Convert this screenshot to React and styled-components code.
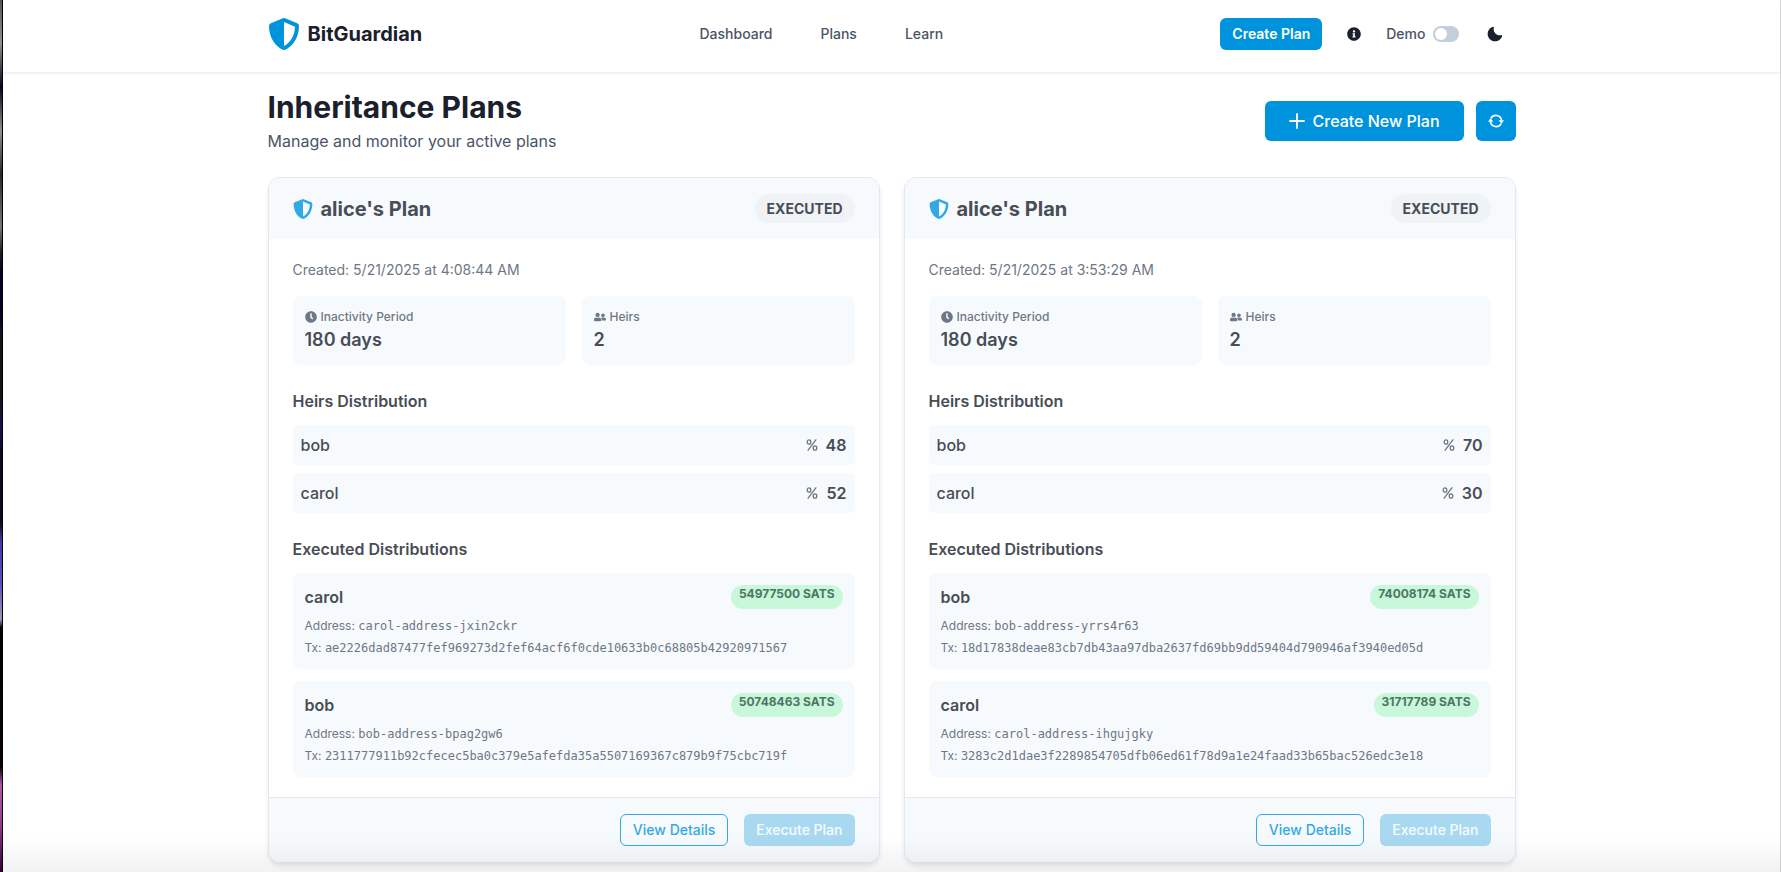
import styled, { createGlobalStyle } from 'styled-components';
import {
  FaShieldAlt,
  FaInfoCircle,
  FaClock,
  FaUserFriends,
} from 'react-icons/fa';

const plans = [
  {
    id: 'plan-1',
    name: "alice's Plan",
    created: '5/21/2025 at 4:08:44 AM',
    days: 180,
    heirs: [
      { name: 'bob', share: 48 },
      { name: 'carol', share: 52 },
    ],
    distributions: [
      {
        name: 'carol',
        sats: 54977500,
        address: 'carol-address-jxin2ckr',
        tx: 'ae2226dad87477fef969273d2fef64acf6f0cde10633b0c68805b42920971567',
      },
      {
        name: 'bob',
        sats: 50748463,
        address: 'bob-address-bpag2gw6',
        tx: '2311777911b92cfecec5ba0c379e5afefda35a5507169367c879b9f75cbc719f',
      },
    ],
  },
  {
    id: 'plan-2',
    name: "alice's Plan",
    created: '5/21/2025 at 3:53:29 AM',
    days: 180,
    heirs: [
      { name: 'bob', share: 70 },
      { name: 'carol', share: 30 },
    ],
    distributions: [
      {
        name: 'bob',
        sats: 74008174,
        address: 'bob-address-yrrs4r63',
        tx: '18d17838deae83cb7db43aa97dba2637fd69bb9dd59404d790946af3940ed05d',
      },
      {
        name: 'carol',
        sats: 31717789,
        address: 'carol-address-ihgujgky',
        tx: '3283c2d1dae3f2289854705dfb06ed61f78d9a1e24faad33b65bac526edc3e18',
      },
    ],
  },
];

export default function App() {
  return (
    <>
      <GlobalStyle />
      <Screen>
        <DesktopEdge />
        <Window>
          <Header>
            <HeaderInner>
              <Logo href="#">
                <FaShieldAlt size={32} color="#0093dd" />
                BitGuardian
              </Logo>
              <Nav>
                <NavLink href="#dashboard">Dashboard</NavLink>
                <NavLink href="#plans">Plans</NavLink>
                <NavLink href="#learn">Learn</NavLink>
              </Nav>
              <Actions>
                <SmallButton type="button">Create Plan</SmallButton>
                <GhostButton type="button" $size={32} aria-label="About">
                  <FaInfoCircle size={14} />
                </GhostButton>
                <DemoLabel htmlFor="demo">
                  Demo
                  <Switch id="demo" type="checkbox" role="switch" />
                </DemoLabel>
                <GhostButton type="button" $size={40} aria-label="Dark mode">
                  <MoonIcon />
                </GhostButton>
              </Actions>
            </HeaderInner>
          </Header>

          <Main>
            <TitleRow>
              <div>
                <Title>Inheritance Plans</Title>
                <Subtitle>Manage and monitor your active plans</Subtitle>
              </div>
              <TitleActions>
                <CreateButton type="button">
                  <PlusIcon />
                  Create New Plan
                </CreateButton>
                <RefreshButton type="button" aria-label="Refresh">
                  <RefreshIcon />
                </RefreshButton>
              </TitleActions>
            </TitleRow>

            <Grid>
              {plans.map(plan => (
                <PlanCard key={plan.id} plan={plan} />
              ))}
            </Grid>
          </Main>
        </Window>
      </Screen>
      <BottomShade />
    </>
  );
}

function PlanCard({ plan }) {
  return (
    <Card>
      <CardHead>
        <CardTitle>
          <FaShieldAlt size={20} color="#33a9e4" />
          {plan.name}
        </CardTitle>
        <Status>Executed</Status>
      </CardHead>

      <CardBody>
        <Created>Created: {plan.created}</Created>

        <Stats>
          <Stat>
            <StatLabel>
              <FaClock size={12} />
              Inactivity Period
            </StatLabel>
            <StatValue>{plan.days} days</StatValue>
          </Stat>
          <Stat>
            <StatLabel>
              <FaUserFriends size={12} />
              Heirs
            </StatLabel>
            <StatValue>{plan.heirs.length}</StatValue>
          </Stat>
        </Stats>

        <SectionTitle>Heirs Distribution</SectionTitle>
        <List $gap={8}>
          {plan.heirs.map(heir => (
            <HeirRow key={heir.name}>
              {heir.name}
              <Share>
                <PercentIcon />
                {heir.share}
              </Share>
            </HeirRow>
          ))}
        </List>

        <SectionTitle>Executed Distributions</SectionTitle>
        <List $gap={12}>
          {plan.distributions.map(item => (
            <Distribution key={item.tx}>
              <DistributionHead>
                <HeirName>{item.name}</HeirName>
                <Sats>{item.sats} sats</Sats>
              </DistributionHead>
              <Detail>
                Address: <Code>{item.address}</Code>
              </Detail>
              <Detail>
                Tx: <Code>{item.tx}</Code>
              </Detail>
            </Distribution>
          ))}
        </List>
      </CardBody>

      <CardFoot>
        <OutlineButton type="button">View Details</OutlineButton>
        <ExecuteButton type="button" disabled>
          Execute Plan
        </ExecuteButton>
      </CardFoot>
    </Card>
  );
}

function MoonIcon() {
  return (
    <svg width="16" height="16" viewBox="0 0 24 24" aria-hidden="true">
      <path
        fill="currentColor"
        d="M21.4 13.7c-.8.2-1.6.3-2.4.3-5 0-9-4-9-9 0-.8.1-1.6.3-2.4.1-.3 0-.7-.3-1-.3-.3-.6-.4-1-.3C4.3 2.7 1 7.1 1 12c0 6.1 4.9 11 11 11 4.9 0 9.3-3.3 10.6-8.1.1-.3 0-.7-.3-1-.2-.2-.6-.3-.9-.2z"
      />
    </svg>
  );
}

function PlusIcon() {
  return (
    <svg width="16" height="16" viewBox="0 0 16 16" aria-hidden="true">
      <path
        d="M8 1v14M1 8h14"
        stroke="currentColor"
        strokeWidth="1.8"
        strokeLinecap="round"
      />
    </svg>
  );
}

function PercentIcon() {
  return (
    <svg width="12" height="12" viewBox="0 0 12 12" aria-hidden="true">
      <g fill="none" stroke="#6e7785" strokeWidth="1.3">
        <path d="M10.2.4 1.8 11.6" />
        <ellipse cx="3" cy="3" rx="1.8" ry="2.2" />
        <ellipse cx="9" cy="9" rx="1.8" ry="2.2" />
      </g>
    </svg>
  );
}

function RefreshIcon() {
  return (
    <svg width="16" height="16" viewBox="0 0 16 16" aria-hidden="true">
      <g fill="none" stroke="currentColor" strokeWidth="1.6">
        <path d="M2.8 5.4A5.8 5.8 0 0 1 13.6 7.4" />
        <path d="M13.2 10.6A5.8 5.8 0 0 1 2.4 8.6" />
      </g>
      <path d="M10.6 7.2H16L13.5 10.8z" fill="currentColor" />
      <path d="M5.4 8.8H0L2.5 5.2z" fill="currentColor" />
    </svg>
  );
}

const GlobalStyle = createGlobalStyle`
  *, *::before, *::after {
    box-sizing: border-box;
  }

  body {
    margin: 0;
    background: #fff;
    color: #1a202c;
    font-family: Inter, 'Liberation Sans', sans-serif;
    font-size: 16px;
    line-height: 24px;
    overflow: hidden;
  }

  button {
    font: inherit;
    cursor: pointer;
  }

  h1, h2, h3, p {
    margin: 0;
  }

  svg {
    flex-shrink: 0;
  }
`;

const Screen = styled.div`
  display: flex;
  min-height: 100vh;
  background: #000;
`;

/* strip of the desktop that shows beside the window */
const DesktopEdge = styled.div`
  width: 3px;
  height: 100vh;
  border-right: 1px solid #000;
  background: linear-gradient(
    #55555a 0%,
    #8f8f94 5%,
    #0a0618 10%,
    #8f8f94 15%,
    #26262e 20%,
    #77777c 26%,
    #1c1c24 29%,
    #080028 31%,
    #080028 36%,
    #12161c 38%,
    #12161c 46%,
    #1c1050 49%,
    #0c0c20 52%,
    #0c0c18 60%,
    #4038a8 62%,
    #5854b8 67%,
    #9c98b4 71%,
    #060008 72%,
    #0c0008 88%,
    #b058b0 90%,
    #a03c9c 94%,
    #380038 100%
  );
`;

const Window = styled.div`
  flex: 1;
  min-width: 0;
  background: #fff;
  border-right: 1px solid #d8d8d8;
`;

/* soft shade over the lower end of the window */
const BottomShade = styled.div`
  position: fixed;
  left: 3px;
  right: 0;
  bottom: 0;
  height: 36px;
  background: linear-gradient(rgba(0, 0, 0, 0), rgba(0, 0, 0, 0.05));
  pointer-events: none;
`;

const Header = styled.header`
  border-bottom: 1px solid #edf2f7;
  box-shadow: 0 1px 2px rgba(0, 0, 0, 0.05);
`;

const HeaderInner = styled.div`
  display: flex;
  align-items: center;
  justify-content: space-between;
  max-width: 1280px;
  margin: 0 auto;
  padding: 14px 16px 18px;
`;

const Logo = styled.a`
  display: flex;
  align-items: center;
  gap: 8px;
  color: #1a202c;
  font-size: 20px;
  font-weight: 700;
  text-decoration: none;
`;

const Nav = styled.nav`
  display: flex;
  gap: 48px;
`;

const NavLink = styled.a`
  color: #4a5568;
  font-size: 14px;
  font-weight: 500;
  text-decoration: none;
`;

const Actions = styled.div`
  display: flex;
  align-items: center;
  gap: 16px;
`;

const Button = styled.button`
  display: flex;
  align-items: center;
  justify-content: center;
  gap: 8px;
  border: none;
  border-radius: 6px;
  background: #0093dd;
  color: #fff;
`;

const SmallButton = styled(Button)`
  height: 32px;
  padding: 0 12px;
  font-size: 14px;
  font-weight: 600;
`;

const OutlineButton = styled(SmallButton)`
  border: 1px solid #33a9e4;
  background: transparent;
  color: #33a9e4;
  font-weight: 500;
`;

const ExecuteButton = styled(SmallButton)`
  background: #a9d9f1;
  color: #f7fbfe;
  font-weight: 500;
`;

const CreateButton = styled(Button)`
  height: 40px;
  padding: 0 24px;
  font-weight: 500;
`;

const RefreshButton = styled(Button)`
  width: 40px;
  height: 40px;
  padding: 0;
`;

const GhostButton = styled(Button)`
  width: ${({ $size }) => $size}px;
  height: ${({ $size }) => $size}px;
  padding: 0;
  background: transparent;
  color: #1a202c;
`;

const DemoLabel = styled.label`
  display: flex;
  align-items: center;
  gap: 8px;
  color: #4a5568;
  font-size: 14px;
  font-weight: 500;
`;

const Switch = styled.input`
  appearance: none;
  width: 26px;
  height: 16px;
  margin: 0;
  padding: 2px;
  border-radius: 8px;
  background: #c3cedb;
  cursor: pointer;

  &::before {
    content: '';
    display: block;
    width: 12px;
    height: 12px;
    border-radius: 50%;
    background: #fff;
  }

  &:checked {
    background: #0093dd;
  }

  &:checked::before {
    margin-left: 10px;
  }
`;

const Main = styled.main`
  max-width: 1280px;
  margin: 0 auto;
  padding: 16px 16px 48px;
`;

const TitleRow = styled.div`
  display: flex;
  align-items: center;
  justify-content: space-between;
  margin-bottom: 24px;
`;

const Title = styled.h1`
  font-size: 30px;
  font-weight: 700;
  line-height: 36px;
`;

const Subtitle = styled.p`
  margin-top: 4px;
  color: #4a5568;
`;

const TitleActions = styled.div`
  display: flex;
  gap: 12px;
`;

const Grid = styled.div`
  display: grid;
  grid-template-columns: repeat(2, minmax(0, 1fr));
  gap: 24px;
`;

const Card = styled.article`
  overflow: hidden;
  border: 1px solid #e2e8f0;
  border-radius: 12px;
  background: #fff;
  color: #484d56;
  box-shadow: 0 4px 6px -1px rgba(0, 0, 0, 0.08),
    0 2px 4px -1px rgba(0, 0, 0, 0.05);
`;

const CardHead = styled.div`
  display: flex;
  align-items: center;
  justify-content: space-between;
  padding: 16px 24px;
  background: #f6fafd;
`;

const CardTitle = styled.h2`
  display: flex;
  align-items: center;
  gap: 8px;
  font-size: 20px;
  font-weight: 700;
`;

const Status = styled.span`
  padding: 4px 12px;
  border-radius: 16px;
  background: #eff3f6;
  font-size: 14px;
  font-weight: 700;
  line-height: 21px;
  text-transform: uppercase;
`;

const CardBody = styled.div`
  padding: 20px 24px;
`;

const Created = styled.p`
  color: #6e7785;
  font-size: 14px;
  line-height: 21px;
`;

const Stats = styled.div`
  display: grid;
  grid-template-columns: 1fr 1fr;
  gap: 16px;
  margin-top: 16px;
`;

const Stat = styled.div`
  padding: 12px;
  border-radius: 8px;
  background: #f6fafd;
`;

const StatLabel = styled.div`
  display: flex;
  align-items: center;
  gap: 4px;
  color: #6e7785;
  font-size: 12px;
  font-weight: 500;
  line-height: 18px;
`;

const StatValue = styled.div`
  font-size: 18px;
  font-weight: 600;
  line-height: 27px;
`;

const SectionTitle = styled.h3`
  margin: 24px 0 12px;
  font-size: 16px;
  font-weight: 600;
`;

const List = styled.div`
  display: flex;
  flex-direction: column;
  gap: ${({ $gap }) => $gap}px;
`;

const HeirRow = styled.div`
  display: flex;
  align-items: center;
  justify-content: space-between;
  padding: 8px;
  border-radius: 6px;
  background: #f6fafd;
  font-weight: 500;
`;

const Share = styled.span`
  display: flex;
  align-items: center;
  gap: 8px;
  font-weight: 600;
`;

const Distribution = styled.div`
  display: flex;
  flex-direction: column;
  gap: 4px;
  padding: 12px;
  border-radius: 8px;
  background: #f6fafd;
`;

const DistributionHead = styled.div`
  display: flex;
  justify-content: space-between;
  margin-bottom: 4px;
`;

const HeirName = styled.span`
  font-weight: 600;
`;

const Sats = styled.span`
  padding: 0 8px;
  border-radius: 12px;
  background: #c8f7da;
  color: #4e7664;
  font-size: 12px;
  font-weight: 700;
  line-height: 18px;
  text-transform: uppercase;
`;

const Detail = styled.p`
  color: #6e7785;
  font-size: 12px;
  line-height: 18px;
`;

const Code = styled.code`
  font-family: 'DejaVu Sans Mono', monospace;
  font-size: 12px;
`;

const CardFoot = styled.div`
  display: flex;
  justify-content: flex-end;
  gap: 16px;
  padding: 16px 24px;
  border-top: 1px solid #e2e8f0;
  background: #f6fafd;
`;
